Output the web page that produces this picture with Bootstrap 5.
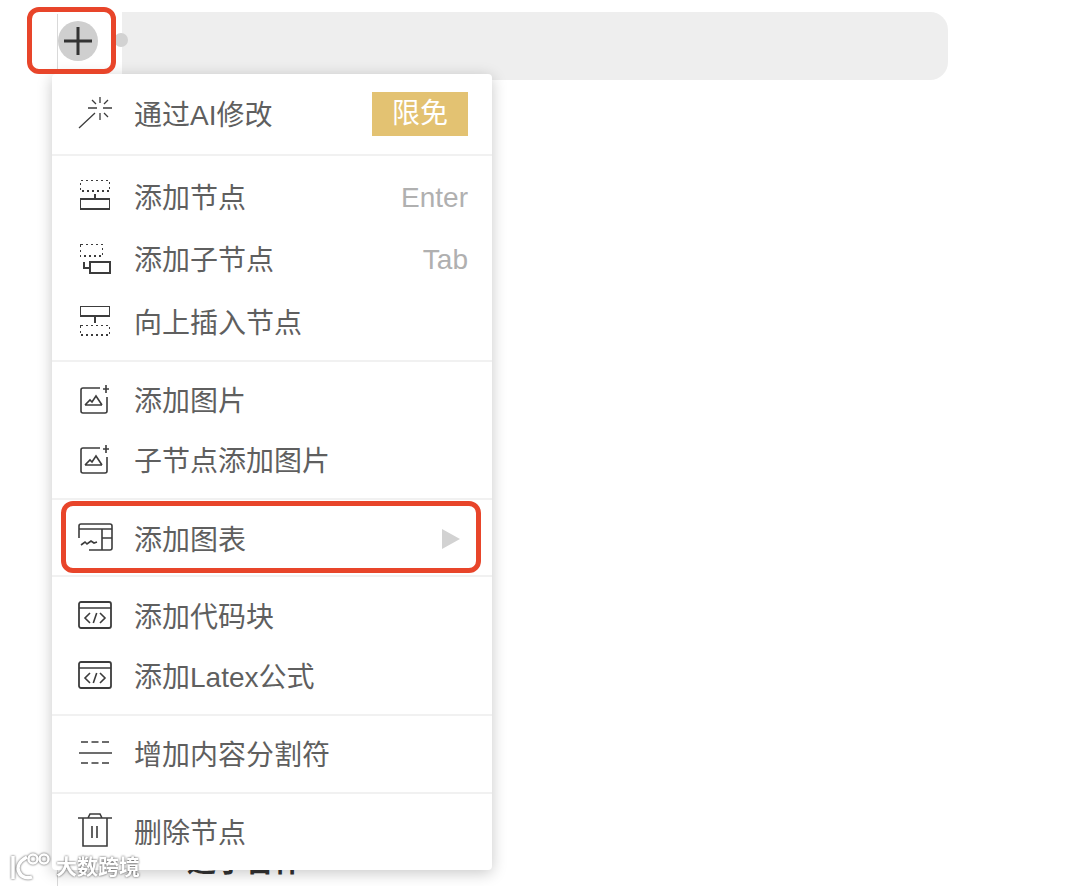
<!DOCTYPE html>
<html lang="zh">
<head>
  <meta charset="UTF-8">
  <title>添加图表</title>
  <link href="https://cdn.jsdelivr.net/npm/bootstrap@5.3.0/dist/css/bootstrap.min.css" rel="stylesheet">
  <style>
    html, body { height: 100%; }
    body { background: #fff; overflow: hidden; font-family: "Liberation Sans", "Noto Sans CJK SC", sans-serif; }
    .stage { position: relative; width: 1076px; height: 886px; overflow: hidden; }
    .tree-line { position: absolute; left: 57px; top: 14px; width: 1px; height: 872px; background: #d9d9d9; }
    .node-bar { position: absolute; left: 122px; top: 12px; width: 826px; height: 68px; background: #eee; border-radius: 0 18px 18px 0; }
    .node-dot { position: absolute; left: 114px; top: 33px; width: 14px; height: 14px; border-radius: 50%; background: #d2d2d2; }
    .add-btn { position: absolute; left: 58px; top: 21px; width: 40px; height: 40px; border-radius: 50%; background: #cfcfcf; display: flex; align-items: center; justify-content: center; }
    .under-text { position: absolute; left: 187px; top: 844px; font-size: 29px; line-height: 36px; color: #333; font-weight: 700; }
    .node-menu.dropdown-menu { display: block; position: absolute; left: 52px; top: 74px; width: 440px; height: 796px; padding: 0; border: 0; border-radius: 4px; background: #fff; box-shadow: 0 3px 15px rgba(0, 0, 0, .22); font-size: 28px; }
    .menu-group { border-bottom: 2px solid #f1f1f1; }
    .menu-group:last-child { border-bottom: 0; }
    .group-ai { height: 82px; padding-top: 10px; }
    .group-nodes { height: 206px; padding-top: 10px; }
    .group-nodes .menu-row { height: 62.5px; }
    .group-pics { height: 138px; padding-top: 8px; }
    .group-chart { height: 77px; padding-top: 9px; }
    .group-code { height: 139px; padding-top: 10px; }
    .group-code .menu-row { height: 59.5px; }
    .group-single { height: 78px; padding-top: 8px; }
    .menu-row { height: 60px; display: flex; align-items: center; padding: 0 24px; color: #5f5f5f; line-height: 1; white-space: nowrap; }
    .row-label { padding-top: 3px; }
    .row-icon { width: 38px; height: 38px; flex: none; margin-right: 20px; fill: none; stroke: #3c3c3c; stroke-width: 1.6; }
    .box-lines { shape-rendering: crispEdges; }
    .row-key { margin-left: auto; padding-top: 1px; color: #b0b0b0; }
    .free-tag { margin-left: auto; width: 96px; height: 44px; background: #e3c272; color: #fff; display: flex; align-items: center; justify-content: center; }
    .row-arrow { margin-left: auto; margin-right: 8px; width: 0; height: 0; border-left: 18px solid #d2d2d2; border-top: 10px solid transparent; border-bottom: 10px solid transparent; }
    .callout { position: absolute; z-index: 1001; border: 5px solid #e8452a; border-radius: 12px; pointer-events: none; }
    .callout-add { left: 27px; top: 7px; width: 89px; height: 67px; }
    .callout-chart { left: 61px; top: 501px; width: 420px; height: 72px; }
    .watermark { position: absolute; z-index: 1001; left: 8px; top: 851px; display: flex; align-items: center; color: #fff; font-size: 21px; line-height: 1; font-weight: 700; filter: drop-shadow(0 0 1px rgba(0, 0, 0, .7)); }
  </style>
</head>
<body>
  <div class="stage">
    <div class="tree-line"></div>
    <div class="node-bar"></div>
    <div class="node-dot"></div>
    <div class="add-btn">
      <svg width="30" height="30" viewBox="0 0 30 30"><path d="M15 1v28M1 15h28" stroke="#333" stroke-width="3" fill="none"/></svg>
    </div>
    <div class="under-text">适于合作</div>

    <div class="node-menu dropdown-menu">
      <div class="menu-group group-ai">
        <div class="menu-row">
          <svg class="row-icon" viewBox="0 0 38 38"><path d="M3 33 19 18M24 2v6M24 18v7M12 13h9M27 13h9M16 5l4 4M32 5l-4 4M28 18l4 4" stroke-width="1.300"/></svg>
          <span class="row-label">通过AI修改</span>
          <span class="free-tag">限免</span>
        </div>
      </div>
      <div class="menu-group group-nodes">
        <div class="menu-row">
          <svg class="row-icon box-lines" viewBox="0 0 38 38"><rect x="4.500" y="2.500" width="29" height="10.500" stroke-dasharray="2 3"/><path d="M19 16v5"/><rect x="4.500" y="21" width="29" height="10"/></svg>
          <span class="row-label">添加节点</span><span class="row-key">Enter</span>
        </div>
        <div class="menu-row">
          <svg class="row-icon box-lines" viewBox="0 0 38 38"><rect x="4.500" y="3.500" width="22" height="11.500" stroke-dasharray="2 3"/><path d="M8 21v6h6"/><rect x="14" y="21" width="20" height="11"/></svg>
          <span class="row-label">添加子节点</span><span class="row-key">Tab</span>
        </div>
        <div class="menu-row">
          <svg class="row-icon box-lines" viewBox="0 0 38 38"><rect x="4.500" y="3.500" width="29" height="9.500"/><path d="M19 13v7"/><rect x="4.500" y="22.500" width="29" height="9.500" stroke-dasharray="2 3"/></svg>
          <span class="row-label">向上插入节点</span>
        </div>
      </div>
      <div class="menu-group group-pics">
        <div class="menu-row">
          <svg class="row-icon" viewBox="0 0 38 38"><path d="M24 7H7a2 2 0 0 0-2 2v21a2 2 0 0 0 2 2h22a2 2 0 0 0 2-2V16M30 4v8M27 8h6M9 24h17M9 24l5-5 2 2 4-6 6 9"/></svg>
          <span class="row-label">添加图片</span>
        </div>
        <div class="menu-row">
          <svg class="row-icon" viewBox="0 0 38 38"><path d="M24 7H7a2 2 0 0 0-2 2v21a2 2 0 0 0 2 2h22a2 2 0 0 0 2-2V16M30 4v8M27 8h6M9 24h17M9 24l5-5 2 2 4-6 6 9"/></svg>
          <span class="row-label">子节点添加图片</span>
        </div>
      </div>
      <div class="menu-group group-chart">
        <div class="menu-row">
          <svg class="row-icon" viewBox="0 0 38 38"><path d="M3 18V6a2 2 0 0 1 2-2h29a2 2 0 0 1 2 2v22a2 2 0 0 1-2 2H13M3 9h33M26 9v21M26 18h10M5 25l4-3 2 2 4-3 3 2 3-1"/></svg>
          <span class="row-label">添加图表</span><span class="row-arrow"></span>
        </div>
      </div>
      <div class="menu-group group-code">
        <div class="menu-row">
          <svg class="row-icon" viewBox="0 0 38 38"><rect x="3" y="4" width="32" height="26" rx="2" stroke-width="1.800"/><path d="M3 10h32M14 15l-5 5 5 5M24 15l5 5-5 5M20.700 15l-3.400 10"/></svg>
          <span class="row-label">添加代码块</span>
        </div>
        <div class="menu-row">
          <svg class="row-icon" viewBox="0 0 38 38"><rect x="3" y="5" width="32" height="26" rx="2" stroke-width="1.800"/><path d="M3 11h32M14 16l-5 5 5 5M24 16l5 5-5 5M20.700 16l-3.400 10"/></svg>
          <span class="row-label">添加Latex公式</span>
        </div>
      </div>
      <div class="menu-group group-single">
        <div class="menu-row">
          <svg class="row-icon" viewBox="0 0 38 38"><path d="M5 7h28M5 28h28" stroke-dasharray="7 3.500"/><path d="M3 18h33"/></svg>
          <span class="row-label">增加内容分割符</span>
        </div>
      </div>
      <div class="menu-group group-single">
        <div class="menu-row">
          <svg class="row-icon" viewBox="0 0 38 38"><path d="M2 5h34M7 5v28h24V5M12 5l2-4h10l2 4M16 13v12M21 13v12"/></svg>
          <span class="row-label">删除节点</span>
        </div>
      </div>
    </div>

    <div class="callout callout-add"></div>
    <div class="callout callout-chart"></div>

    <div class="watermark">
      <svg width="44" height="30" viewBox="0 0 44 30" fill="none" stroke="#fff" stroke-width="3.500"><path d="M5 5v23M19 6C10 11 9 17 11 21c2 5 8 7 13 5"/><circle cx="25" cy="8" r="4.500" stroke-width="2.500"/><circle cx="36" cy="8" r="4.500" stroke-width="2.500"/></svg>
      <span class="ms-1">大数跨境</span>
    </div>
  </div>
  <script src="https://cdn.jsdelivr.net/npm/bootstrap@5.3.0/dist/js/bootstrap.bundle.min.js"></script>
</body>
</html>
